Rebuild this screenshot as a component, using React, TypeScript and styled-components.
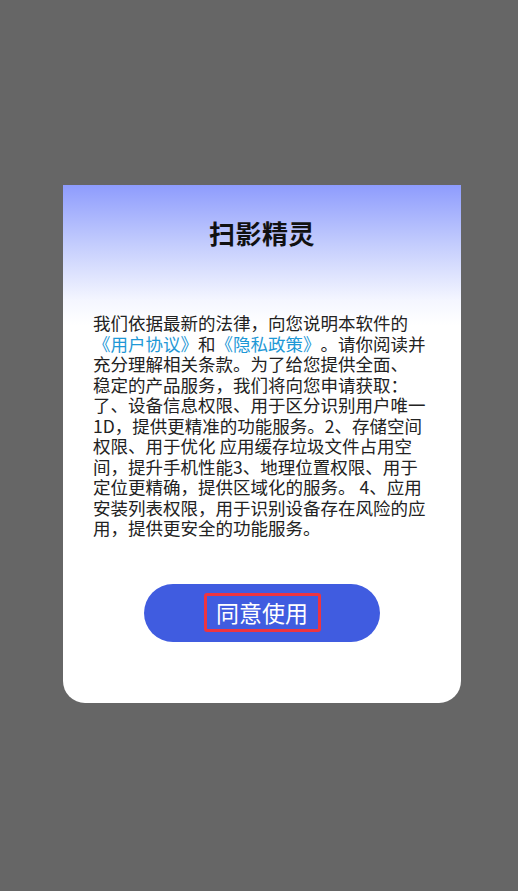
import React from "react";
import styled, { createGlobalStyle } from "styled-components";

const GlobalStyle = createGlobalStyle`
  html, body {
    margin: 0;
    padding: 0;
    background: #666666;
  }
  body {
    font-family: "Noto Sans CJK SC", "Noto Sans", sans-serif;
  }
`;

const Screen = styled.div`
  width: 518px;
  height: 891px;
  display: flex;
  flex-direction: column;
  padding-top: 185px;
  padding-left: 63px;
  box-sizing: border-box;
`;

const Card = styled.div`
  width: 398px;
  height: 518px;
  box-sizing: border-box;
  background: linear-gradient(180deg, #8e9cfd 0px, #c4cdfd 60px, #f4f6ff 115px, #ffffff 140px);
  border-radius: 0 0 22px 22px;
  display: flex;
  flex-direction: column;
  align-items: center;
  padding-top: 30px;
`;

const Title = styled.h2`
  margin: 0;
  font-size: 26px;
  line-height: 36px;
  font-weight: 700;
  color: #111111;
  letter-spacing: 0.5px;
`;

const Body = styled.p`
  margin: 62px 0 0;
  align-self: flex-start;
  padding-left: 30px;
  width: 345px;
  font-size: 17.5px;
  line-height: 20.5px;
  color: #222222;
  white-space: nowrap;
  text-spacing-trim: space-all;
  font-feature-settings: "halt" 0, "chws" 0;
`;

const Link = styled.span`
  color: #1e98d6;
`;

const AgreeButton = styled.button`
  margin-top: 45px;
  width: 236px;
  height: 58px;
  border: none;
  border-radius: 29px;
  background: #405ce0;
  display: flex;
  align-items: center;
  justify-content: center;
  cursor: pointer;
  padding: 0;
`;

const ButtonLabel = styled.span`
  display: flex;
  align-items: center;
  justify-content: center;
  width: 117px;
  height: 39px;
  box-sizing: border-box;
  border: 3px solid #ee3440;
  border-radius: 3px;
  color: #ffffff;
  font-family: "Noto Sans CJK SC", "Noto Sans", sans-serif;
  font-size: 23px;
  font-weight: 400;
  line-height: 1;
`;

const lines: React.ReactNode[] = [
  "我们依据最新的法律，向您说明本软件的",
  <>
    <Link>《用户协议》</Link>和<Link>《隐私政策》</Link>。请你阅读并
  </>,
  "充分理解相关条款。为了给您提供全面、",
  "稳定的产品服务，我们将向您申请获取：",
  "了、设备信息权限、用于区分识别用户唯一",
  "1D，提供更精准的功能服务。2、存储空间",
  "权限、用于优化 应用缓存垃圾文件占用空",
  "间，提升手机性能3、地理位置权限、用于",
  "定位更精确，提供区域化的服务。 4、应用",
  "安装列表权限，用于识别设备存在风险的应",
  "用，提供更安全的功能服务。",
];

export default function App() {
  return (
    <>
      <GlobalStyle />
      <Screen>
        <Card>
          <Title>扫影精灵</Title>
          <Body>
            {lines.map((line, i) => (
              <React.Fragment key={i}>
                {line}
                {i < lines.length - 1 && <br />}
              </React.Fragment>
            ))}
          </Body>
          <AgreeButton>
            <ButtonLabel>同意使用</ButtonLabel>
          </AgreeButton>
        </Card>
      </Screen>
    </>
  );
}
